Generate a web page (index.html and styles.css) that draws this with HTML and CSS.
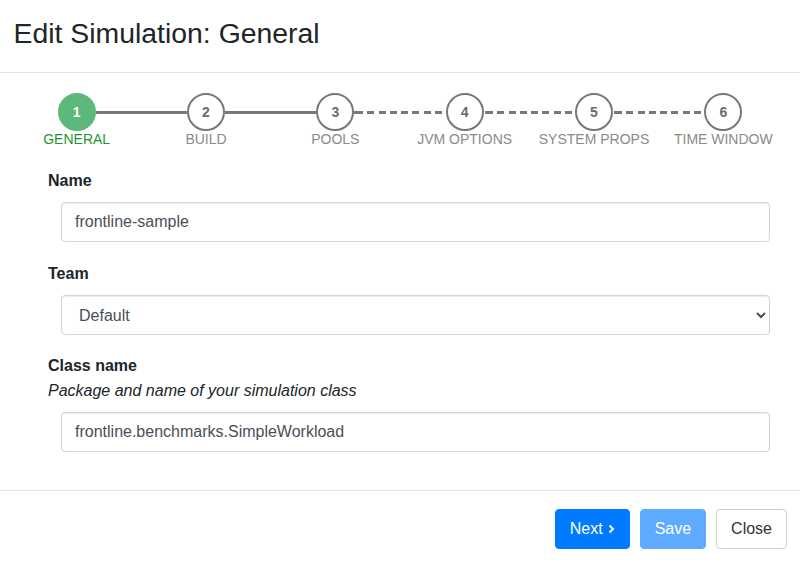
FILE: index.html
```html
<!DOCTYPE html>
<html>
<head>
<meta charset="utf-8">
<link rel="stylesheet" href="styles.css">
</head>
<body>
<div class="modal">
  <div class="modal-header">
    <h4 class="modal-title">Edit Simulation: General</h4>
  </div>
  <div class="modal-body">
    <div class="stepper">
      <div class="track">
        <div class="circle active">1</div>
        <div class="line solid"></div>
        <div class="circle">2</div>
        <div class="line solid"></div>
        <div class="circle">3</div>
        <div class="line dashed"></div>
        <div class="circle">4</div>
        <div class="line dashed"></div>
        <div class="circle">5</div>
        <div class="line dashed"></div>
        <div class="circle">6</div>
      </div>
      <div class="labels">
        <div class="step-label active">GENERAL</div>
        <div class="step-label">BUILD</div>
        <div class="step-label">POOLS</div>
        <div class="step-label">JVM OPTIONS</div>
        <div class="step-label">SYSTEM PROPS</div>
        <div class="step-label">TIME WINDOW</div>
      </div>
    </div>
    <form class="form">
      <div class="form-group">
        <label class="form-label">Name</label>
        <input class="form-control" type="text" value="frontline-sample">
      </div>
      <div class="form-group">
        <label class="form-label">Team</label>
        <select class="form-control form-select"><option>Default</option></select>
      </div>
      <div class="form-group">
        <label class="form-label with-help">Class name</label>
        <div class="help">Package and name of your simulation class</div>
        <input class="form-control" type="text" value="frontline.benchmarks.SimpleWorkload">
      </div>
    </form>
  </div>
  <div class="modal-footer">
    <button class="btn btn-primary" type="button">Next <svg class="chev" width="7" height="10" viewBox="0 0 7 10"><path d="M1.5 1.5 L5 5 L1.5 8.5" fill="none" stroke="#fff" stroke-width="2"/></svg></button>
    <button class="btn btn-primary disabled" type="button">Save</button>
    <button class="btn btn-default" type="button">Close</button>
  </div>
</div>
</body>
</html>
```
FILE: styles.css
```css
* { box-sizing: border-box; }
html, body { margin: 0; padding: 0; background: #fff; }
body {
  font-family: "Liberation Sans", Arial, sans-serif;
  font-size: 16px;
  line-height: 1.5;
  color: #212529;
}
.modal { width: 800px; }
.modal-header {
  height: 73px;
  padding: 16px 12px 0 13.5px;
  border-bottom: 1px solid #e1e3e6;
}
.modal-title {
  margin: 0;
  font-size: 28.4px;
  font-weight: 400;
  line-height: 1.2;
  color: #212529;
}
.modal-body { padding: 20px 0 19px; }
.stepper { margin: 0 12px; }
.track {
  display: flex;
  align-items: center;
  padding-left: 45.7px;
}
.circle {
  flex: 0 0 38px;
  width: 38px;
  height: 38px;
  border-radius: 50%;
  border: 2px solid #787878;
  background: #fff;
  color: #6c6c6c;
  font-size: 14px;
  font-weight: 700;
  display: flex;
  align-items: center;
  justify-content: center;
}
.circle.active {
  background: #5cb97b;
  border-color: #5cb97b;
  color: #fff;
}
.line {
  flex: 0 0 91.33px;
  height: 3px;
}
.line.solid { background: #787878; }
.line.dashed {
  background: repeating-linear-gradient(to right, #787878 0 7px, transparent 7px 11.3px);
  background-position: 2px 0;
}
.labels {
  display: grid;
  grid-template-columns: repeat(6, 1fr);
}
.step-label {
  text-align: center;
  font-size: 14px;
  line-height: 16px;
  color: #8a8a8a;
}
.step-label.active { color: #1f9430; }
.form { padding: 22px 30px 0 48px; }
.form-group { margin-bottom: 19px; }
.form-group:first-child { margin-bottom: 20px; }
.form-label {
  display: block;
  font-weight: 700;
  line-height: 24px;
  margin-bottom: 9px;
  color: #212529;
}
.form-label.with-help { margin-bottom: 0; }
.help {
  font-style: italic;
  line-height: 24px;
  margin-top: 1px;
  margin-bottom: 9px;
  color: #212529;
}
.form-control {
  display: block;
  width: 709px;
  margin-left: 13px;
  height: 40px;
  padding: 6px 13px;
  font-family: "Liberation Sans", Arial, sans-serif;
  font-size: 16px;
  color: #495057;
  background: #fff;
  border: 1px solid #ced4da;
  border-radius: 4px;
  box-shadow: inset 0 1px 1px rgba(0,0,0,.075);
}
.form-select { padding-left: 13px; }
.modal-footer {
  border-top: 1px solid #e1e3e6;
  padding: 18px 13px 14px;
  display: flex;
  justify-content: flex-end;
  gap: 10px;
}
.btn {
  font-family: "Liberation Sans", Arial, sans-serif;
  font-size: 16px;
  line-height: 24px;
  padding: 7px 14px;
  border-radius: 4px;
  border: 1px solid transparent;
  cursor: pointer;
  display: inline-flex;
  align-items: center;
}
.btn-primary { background: #007bff; border-color: #007bff; color: #fff; }
.btn-primary.disabled { background: #5eaaff; border-color: #5eaaff; }
.btn-default { background: #fff; border-color: #cfcfcf; color: #333; }
.chev { margin-left: 5px; }
```
